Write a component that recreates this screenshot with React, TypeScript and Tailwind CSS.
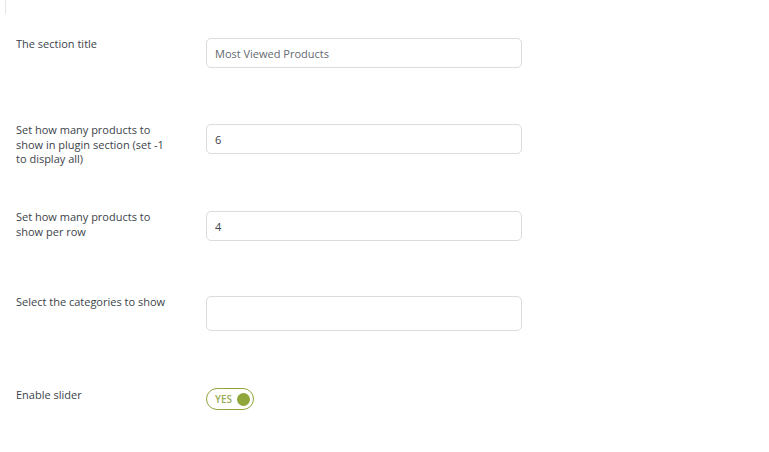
import { useState } from 'react';

const rows = [
    { label: 'The section title', value: 'Most Viewed Products', muted: true, h: 'h-[86px]' },
    { label: 'Set how many products to show in plugin section (set -1 to display all)', value: '6', h: 'h-[87px]' },
    { label: 'Set how many products to show per row', value: '4', h: 'h-[85px]' },
];

export default function App() {
    const [slider, setSlider] = useState(true);

    return (
        <div className="min-h-screen bg-white font-['Open_Sans',sans-serif] text-[11px] text-[#3c434a]">
            <div className="h-[14px] w-px ml-[5px] bg-[#e5e5e5]" />
            <div className="pl-4 pt-6">
                {rows.map((row) => (
                    <div key={row.label} className={`flex ${row.h}`}>
                        <label className="w-[190px] pr-8 -mt-px leading-[14.5px]">{row.label}</label>
                        <input
                            defaultValue={row.value}
                            className={`h-[30px] w-[316px] rounded-[5px] border border-[#dcdcde] px-2 text-[11px] outline-none ${row.muted ? 'text-[#646970]' : 'text-[#3c434a]'}`}
                        />
                    </div>
                ))}

                {/* Categories select */}
                <div className="flex h-[93px]">
                    <label className="w-[190px] -mt-px leading-[14.5px]">Select the categories to show</label>
                    <div className="h-[35px] w-[316px] rounded-[5px] border border-[#dcdcde]" />
                </div>

                {/* Slider toggle */}
                <div className="flex">
                    <label className="w-[190px] -mt-px leading-[14.5px]">Enable slider</label>
                    <button
                        onClick={() => setSlider(!slider)}
                        className="-mt-px flex h-[22px] w-[48px] items-center justify-between rounded-full border-[1.5px] border-[#8fa63b] pl-[8px] pr-[3px]"
                    >
                        <span className="text-[10px] font-semibold leading-none text-[#9aab55]">{slider ? 'YES' : 'NO'}</span>
                        <span className="h-[13px] w-[13px] rounded-full bg-[#8fa63b]" />
                    </button>
                </div>
            </div>
        </div>
    );
}
